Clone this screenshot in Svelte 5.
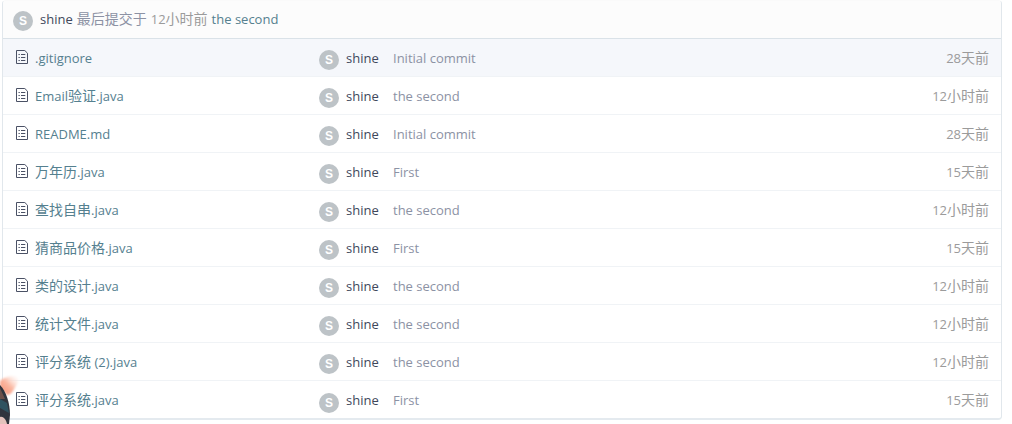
<script lang="ts">
	interface FileRow {
		name: string;
		message: string;
		age: string;
	}

	const author = 'shine';

	const files: FileRow[] = [
		{ name: '.gitignore', message: 'Initial commit', age: '28天前' },
		{ name: 'Email验证.java', message: 'the second', age: '12小时前' },
		{ name: 'README.md', message: 'Initial commit', age: '28天前' },
		{ name: '万年历.java', message: 'First', age: '15天前' },
		{ name: '查找自串.java', message: 'the second', age: '12小时前' },
		{ name: '猜商品价格.java', message: 'First', age: '15天前' },
		{ name: '类的设计.java', message: 'the second', age: '12小时前' },
		{ name: '统计文件.java', message: 'the second', age: '12小时前' },
		{ name: '评分系统 (2).java', message: 'the second', age: '12小时前' },
		{ name: '评分系统.java', message: 'First', age: '15天前' }
	];

	let active = $state(0);

	// Han characters are set one pixel larger than the Latin around them.
	function runs(text: string) {
		return (text.match(/[\u4e00-\u9fff]+|[^\u4e00-\u9fff]+/g) ?? []).map((part) => ({
			part,
			han: /[\u4e00-\u9fff]/.test(part)
		}));
	}
</script>

{#snippet mixed(text: string)}
	{#each runs(text) as run}<span class:han={run.han}>{run.part}</span>{/each}
{/snippet}

<div class="page">
	<section class="files">
		<header class="commit">
			<span class="avatar">S</span>
			<a class="author" href="#author">{author}</a>
			<span class="muted">{@render mixed('最后提交于')}</span>
			<span class="age">{@render mixed('12小时前')}</span>
			<a class="link" href="#commit">the second</a>
		</header>
		{#each files as file, i}
			<!-- svelte-ignore a11y_no_static_element_interactions -->
			<div class="row" class:active={i === active} onmouseenter={() => (active = i)}>
				<div class="name">
					<svg viewBox="0 0 12 14" width="12" height="14" aria-hidden="true">
						<path d="M.5.5h8.3l2.7 2.7v10.3H.5z" fill="none" stroke="currentColor" />
						<path
							d="M2.5 4.5h1.3M5 4.5h4.3M2.5 7.5h1.3M5 7.5h4.3M2.5 10.5h1.3M5 10.5h4.3"
							fill="none"
							stroke="currentColor"
						/>
					</svg>
					<a class="link" href="#file">{@render mixed(file.name)}</a>
				</div>
				<div class="who">
					<span class="avatar">S</span>
					<a class="author" href="#author">{author}</a>
				</div>
				<div class="message">{file.message}</div>
				<div class="age">{@render mixed(file.age)}</div>
			</div>
		{/each}
	</section>

	<svg class="mascot" viewBox="0 0 24 50" width="24" height="50" aria-hidden="true">
		<defs>
			<linearGradient id="ear" x1="0" y1="1" x2="1" y2="0">
				<stop offset="0" stop-color="#f58e70" />
				<stop offset=".5" stop-color="#fbb8a2" />
				<stop offset="1" stop-color="#fff0ea" stop-opacity="0" />
			</linearGradient>
			<filter id="soft" x="-30%" y="-30%" width="160%" height="160%">
				<feGaussianBlur stdDeviation="1" />
			</filter>
		</defs>
		<path
			d="M0 7C3 4 8 2 16 2C20 3 19 7 16 12C13 17 11 21 7 21L0 14z"
			fill="url(#ear)"
			filter="url(#soft)"
		/>
		<path d="M0 11C6 17 10 29 10 41L9 50H0z" fill="#30343d" />
		<path d="M0 25L7 29L9 39L0 34z" fill="#2f5260" />
		<path d="M0 14L5 25L0 25z" fill="#6b4f49" />
		<path d="M0 43C3 42 6 45 7 50H0z" fill="#e4c2bc" />
	</svg>
</div>

<style>
	:global(body) {
		background: #fff;
	}
	.page {
		position: relative;
		height: 424px;
		overflow: hidden;
		font-family: 'Open Sans', 'Noto Sans CJK SC', sans-serif;
		font-size: 13px;
		line-height: 20px;
	}
	.files {
		box-sizing: border-box;
		width: 1000px;
		height: 420px;
		margin-left: 2px;
		border: 1px solid #e1e7ec;
		border-top-color: #fafafa;
		border-bottom: 2px solid #e4eaef;
		border-radius: 4px;
		overflow: hidden;
	}
	.commit {
		box-sizing: border-box;
		display: flex;
		align-items: center;
		gap: 4px;
		height: 38px;
		padding: 0 10px 2px;
		border-bottom: 1px solid #dae2e8;
		background: #fcfcfc;
	}
	.row {
		box-sizing: border-box;
		display: grid;
		grid-template-columns: 304px 74px 1fr auto;
		align-items: center;
		height: 38px;
		padding: 0 12px;
		border-bottom: 1px solid #f0f3f6;
	}
	.row:last-child {
		border-bottom: 0;
	}
	.row.active {
		background: #f5f7fb;
	}
	.name,
	.who {
		display: flex;
		align-items: center;
	}
	.name svg {
		flex: none;
		margin: -2px 7px 0 1px;
		color: #4a5165;
	}
	.avatar {
		flex: none;
		width: 20px;
		height: 20px;
		margin-top: 5px;
		margin-right: 7px;
		border-radius: 50%;
		background: #bdc3c7;
		color: #fff;
		font-family: 'Liberation Sans', sans-serif;
		font-size: 12px;
		font-weight: 700;
		line-height: 21px;
		text-align: center;
	}
	.commit .avatar {
		margin-right: 3px;
	}
	.han {
		font-family: 'Noto Sans CJK SC', sans-serif;
		font-size: 14px;
		line-height: 1;
	}
	a {
		text-decoration: none;
	}
	.author {
		color: #40485b;
	}
	.link {
		color: #55808f;
	}
	.message,
	.muted {
		color: #8c92a4;
	}
	.age {
		color: #9b9b9b;
	}
	.mascot {
		position: absolute;
		left: 0;
		bottom: 0;
	}
</style>
